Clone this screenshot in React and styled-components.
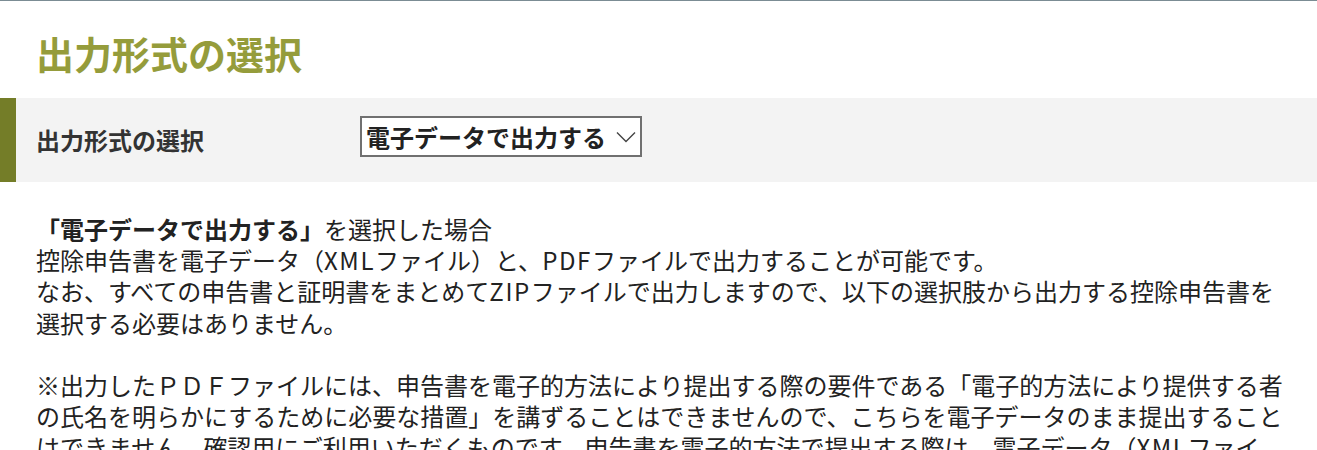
import React from 'react';
import styled, { createGlobalStyle } from 'styled-components';

const GlobalStyle = createGlobalStyle`
  html, body {
    margin: 0;
    padding: 0;
    background: #ffffff;
  }
  body {
    font-family: "Noto Sans CJK JP", "Noto Sans", sans-serif;
    color: #222222;
  }
`;

const App = () => {
  return (
    <Page>
      <GlobalStyle />
      <Title>出力形式の選択</Title>
      <FormRow>
        <Label>出力形式の選択</Label>
        <SelectBox>
          <SelectText>電子データで出力する</SelectText>
          <Chevron width="20" height="12" viewBox="0 0 20 12">
            <path d="M1 1.5 L10 10.5 L19 1.5" fill="none" stroke="#444" strokeWidth="1.4" />
          </Chevron>
        </SelectBox>
      </FormRow>
      <Body>
        <Paragraph>
          <strong>「電子データで出力する」</strong>を選択した場合
          <br />
          控除申告書を電子データ（<Latin>XML</Latin>ファイル）と、<Latin>PDF</Latin>ファイルで出力することが可能です。
          <br />
          なお、すべての申告書と証明書をまとめて<Latin>ZIP</Latin>ファイルで出力しますので、以下の選択肢から出力する控除申告書を選択する必要はありません。
        </Paragraph>
        <Paragraph>
          ※出力したＰＤＦファイルには、申告書を電子的方法により提出する際の要件である「電子的方法により提供する者の氏名を明らかにするために必要な措置」を講ずることはできませんので、こちらを電子データのまま提出することはできません。確認用にご利用いただくものです。申告書を電子的方法で提出する際は、電子データ（<Latin>XML</Latin>ファイル）を提出してください。
        </Paragraph>
      </Body>
    </Page>
  );
};

const Page = styled.div`
  border-top: 1px solid #7b8c94;
  min-height: 449px;
`;

const Title = styled.h2`
  margin: 0;
  padding: 30px 36px 0;
  height: 67px;
  font-size: 38px;
  font-weight: 700;
  line-height: 44px;
  color: #959c3b;
`;

const FormRow = styled.div`
  display: flex;
  align-items: center;
  height: 84px;
  box-sizing: border-box;
  border-left: 16px solid #747d28;
  background: #f3f3f3;
  padding-left: 20px;
`;

const Label = styled.div`
  width: 324px;
  font-size: 24px;
  font-weight: 700;
  line-height: 32px;
  color: #333333;
`;

const SelectBox = styled.div`
  display: flex;
  align-items: center;
  gap: 10px;
  height: 41px;
  flex-shrink: 0;
  box-sizing: border-box;
  width: 282px;
  border: 2px solid #707070;
  background: #ffffff;
  padding: 0 6px 0 4px;
  margin-top: -7px;
`;

const SelectText = styled.span`
  font-size: 24px;
  font-weight: 700;
  color: #222222;
  white-space: nowrap;
  line-height: 1;
`;

const Chevron = styled.svg`
  flex-shrink: 0;
  margin-left: auto;
`;

const Body = styled.div`
  padding: 31px 24px 0 36px;
`;

const Paragraph = styled.p`
  margin: 0 0 31px;
  font-size: 24px;
  line-height: 31.2px;
  color: #222222;

  strong {
    font-weight: 700;
  }
`;

const Latin = styled.span`
  letter-spacing: 1.6px;
`;

export default App;
